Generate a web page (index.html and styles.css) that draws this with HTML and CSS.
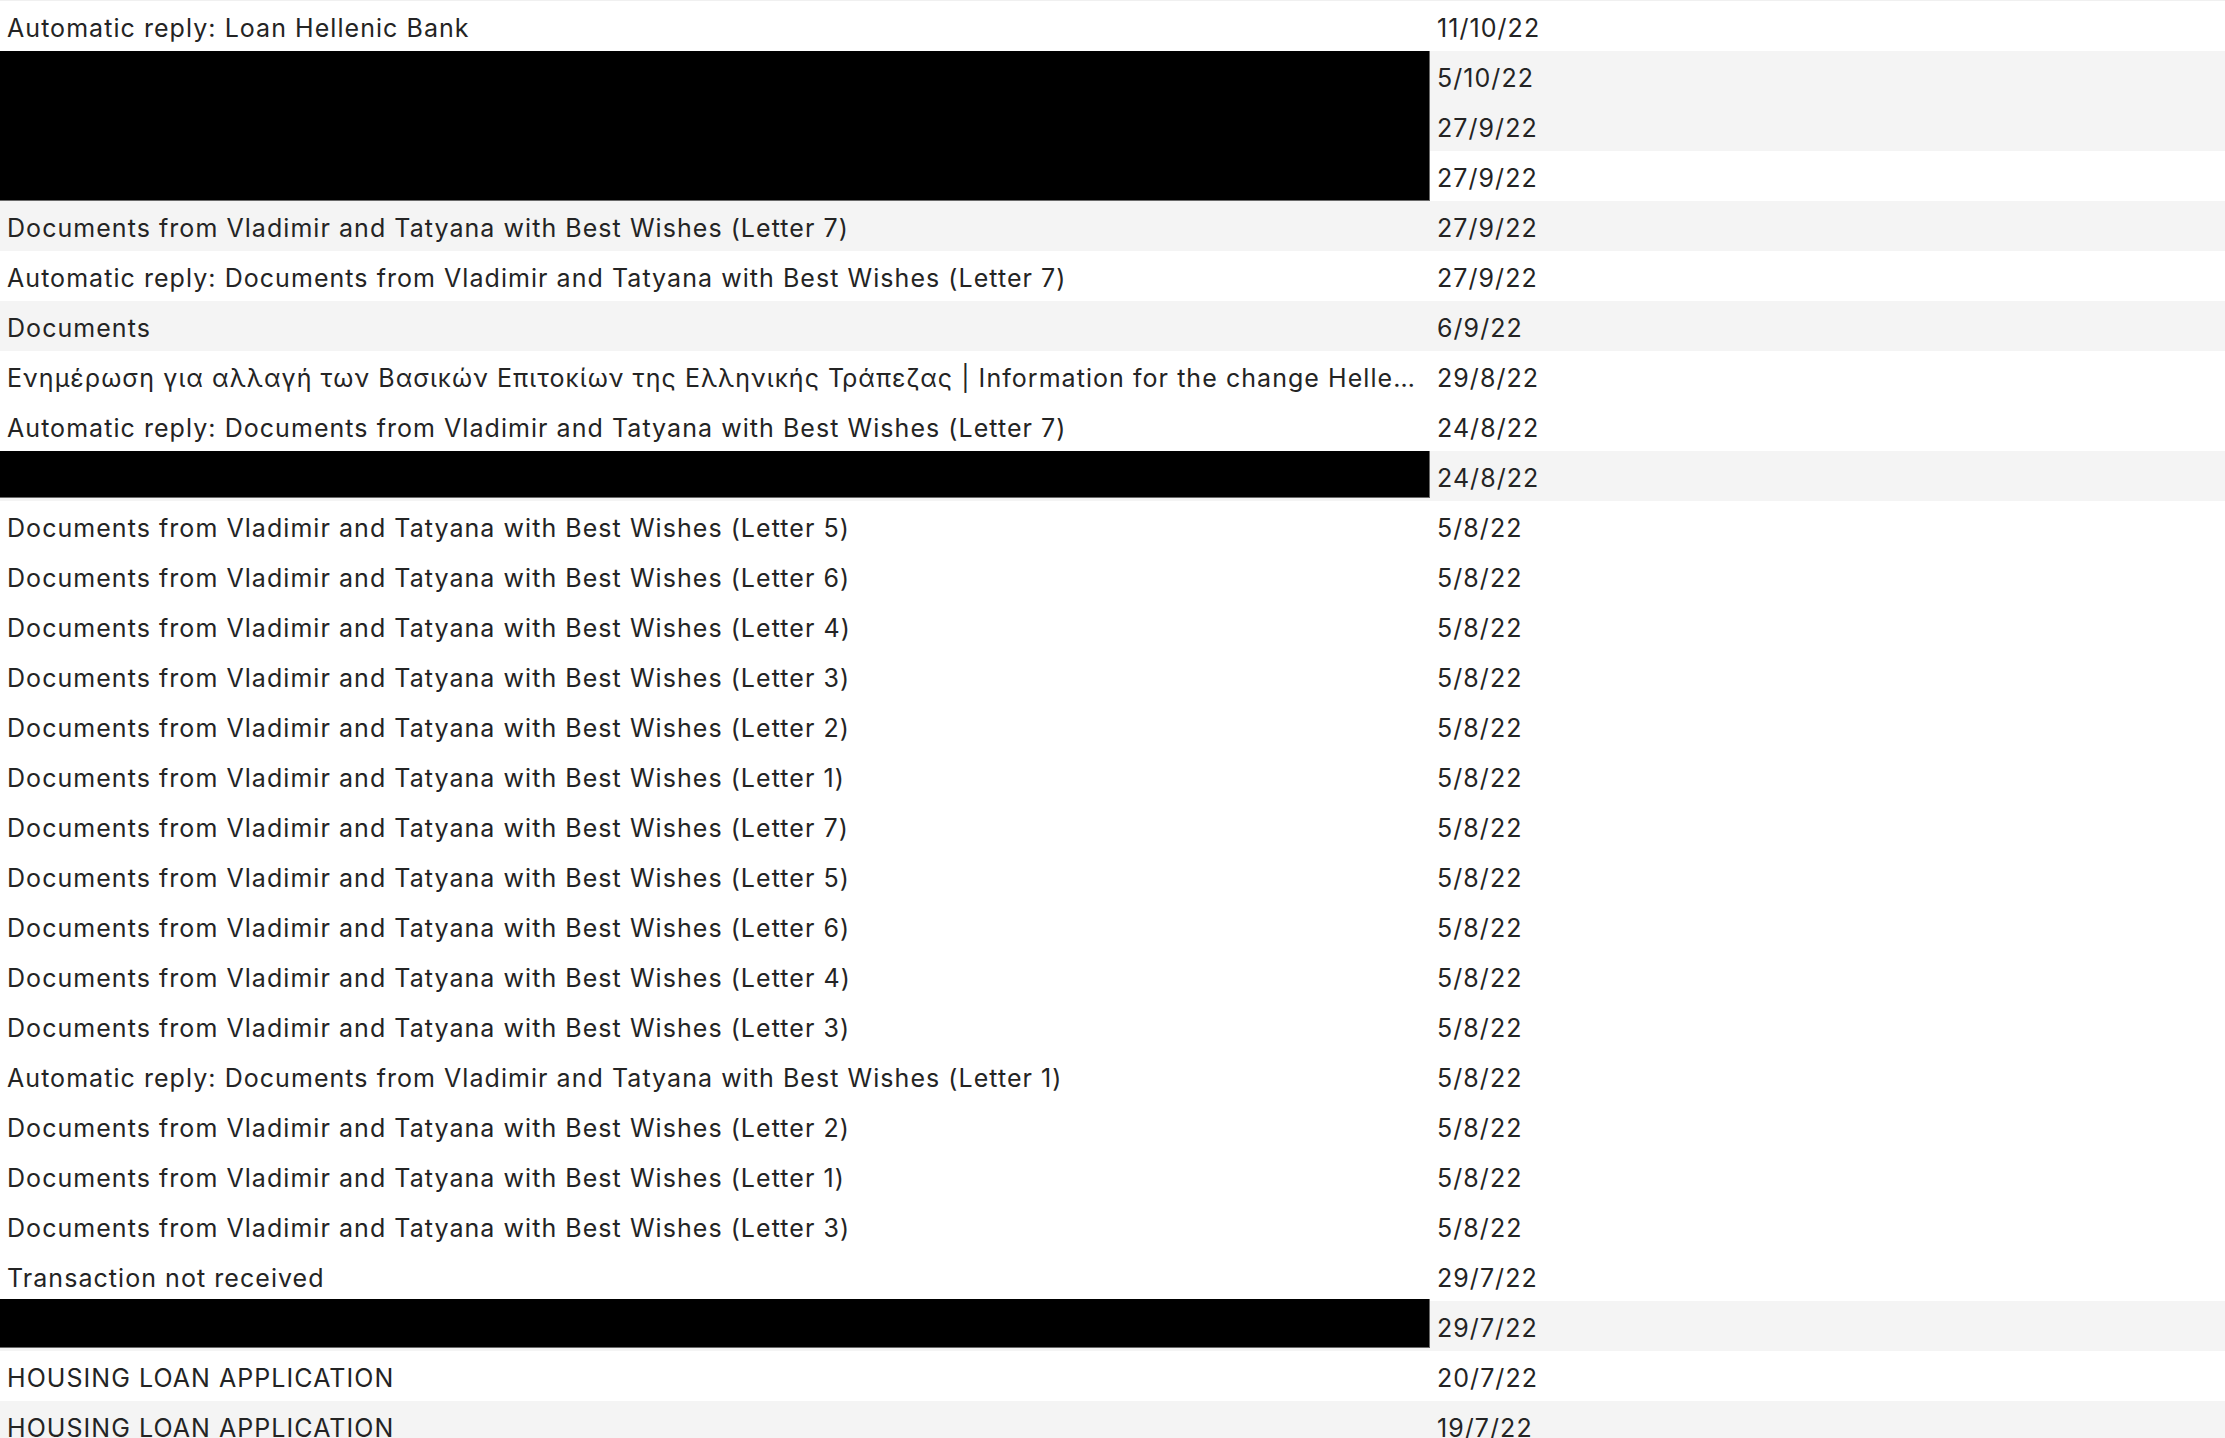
FILE: index.html
```html
<!DOCTYPE html>
<html lang="en">
<head>
    <meta charset="UTF-8">
    <meta name="viewport" content="width=device-width, initial-scale=1.0">
    <title>Mail</title>
    <link rel="stylesheet" href="styles.css">
</head>
<body>
    <div class="mail-list">
        <div class="row"><div class="subject">Automatic reply: Loan Hellenic Bank</div><div class="date">11/10/22</div></div>
        <div class="row alt"><div class="subject"></div><div class="date">5/10/22</div></div>
        <div class="row alt"><div class="subject"></div><div class="date">27/9/22</div></div>
        <div class="row"><div class="subject"></div><div class="date">27/9/22</div></div>
        <div class="row alt"><div class="subject">Documents from Vladimir and Tatyana with Best Wishes (Letter 7)</div><div class="date">27/9/22</div></div>
        <div class="row"><div class="subject">Automatic reply: Documents from Vladimir and Tatyana with Best Wishes (Letter 7)</div><div class="date">27/9/22</div></div>
        <div class="row alt"><div class="subject">Documents</div><div class="date">6/9/22</div></div>
        <div class="row"><div class="subject">Ενημέρωση για αλλαγή των Βασικών Επιτοκίων της Ελληνικής Τράπεζας | Information for the change Helle…</div><div class="date">29/8/22</div></div>
        <div class="row"><div class="subject">Automatic reply: Documents from Vladimir and Tatyana with Best Wishes (Letter 7)</div><div class="date">24/8/22</div></div>
        <div class="row alt"><div class="subject"></div><div class="date">24/8/22</div></div>
        <div class="row"><div class="subject">Documents from Vladimir and Tatyana with Best Wishes (Letter 5)</div><div class="date">5/8/22</div></div>
        <div class="row"><div class="subject">Documents from Vladimir and Tatyana with Best Wishes (Letter 6)</div><div class="date">5/8/22</div></div>
        <div class="row"><div class="subject">Documents from Vladimir and Tatyana with Best Wishes (Letter 4)</div><div class="date">5/8/22</div></div>
        <div class="row"><div class="subject">Documents from Vladimir and Tatyana with Best Wishes (Letter 3)</div><div class="date">5/8/22</div></div>
        <div class="row"><div class="subject">Documents from Vladimir and Tatyana with Best Wishes (Letter 2)</div><div class="date">5/8/22</div></div>
        <div class="row"><div class="subject">Documents from Vladimir and Tatyana with Best Wishes (Letter 1)</div><div class="date">5/8/22</div></div>
        <div class="row"><div class="subject">Documents from Vladimir and Tatyana with Best Wishes (Letter 7)</div><div class="date">5/8/22</div></div>
        <div class="row"><div class="subject">Documents from Vladimir and Tatyana with Best Wishes (Letter 5)</div><div class="date">5/8/22</div></div>
        <div class="row"><div class="subject">Documents from Vladimir and Tatyana with Best Wishes (Letter 6)</div><div class="date">5/8/22</div></div>
        <div class="row"><div class="subject">Documents from Vladimir and Tatyana with Best Wishes (Letter 4)</div><div class="date">5/8/22</div></div>
        <div class="row"><div class="subject">Documents from Vladimir and Tatyana with Best Wishes (Letter 3)</div><div class="date">5/8/22</div></div>
        <div class="row"><div class="subject">Automatic reply: Documents from Vladimir and Tatyana with Best Wishes (Letter 1)</div><div class="date">5/8/22</div></div>
        <div class="row"><div class="subject">Documents from Vladimir and Tatyana with Best Wishes (Letter 2)</div><div class="date">5/8/22</div></div>
        <div class="row"><div class="subject">Documents from Vladimir and Tatyana with Best Wishes (Letter 1)</div><div class="date">5/8/22</div></div>
        <div class="row"><div class="subject">Documents from Vladimir and Tatyana with Best Wishes (Letter 3)</div><div class="date">5/8/22</div></div>
        <div class="row"><div class="subject">Transaction not received</div><div class="date">29/7/22</div></div>
        <div class="row alt"><div class="subject"></div><div class="date">29/7/22</div></div>
        <div class="row"><div class="subject">HOUSING LOAN APPLICATION</div><div class="date">20/7/22</div></div>
        <div class="row alt"><div class="subject">HOUSING LOAN APPLICATION</div><div class="date">19/7/22</div></div>

        <!-- redactions drawn over the subjects -->
        <div class="redact redact-1"></div>
        <div class="redact redact-2"></div>
        <div class="redact redact-3"></div>
    </div>
</body>
</html>
```

FILE: styles.css
```css
body {
    margin: 0;
    padding: 0;
    background: #ffffff;
    font-family: Inter, "Noto Sans", sans-serif;
    color: #242424;
    overflow: hidden;
}
.mail-list {
    position: relative;
    border-top: 1px solid #f0f0f0;
}
.row {
    display: grid;
    grid-template-columns: 1430px 1fr;
    height: 50px;
    align-items: center;
    font-size: 25px;
    letter-spacing: 1.05px;
}
.row.alt {
    background: #f4f4f4;
}
.subject {
    padding: 3px 6px 0 7px;
    white-space: nowrap;
    overflow: hidden;
    text-overflow: ellipsis;
}
.date {
    padding: 3px 0 0 7px;
    white-space: nowrap;
}
.redact {
    position: absolute;
    left: 0;
    width: 1429px;
    background: #000;
    border-right: 1px solid #6a6a6a;
    border-bottom: 1px solid #6a6a6a;
}
.redact-1 {
    top: 50px;
    height: 149px;
}
.redact-2 {
    top: 450px;
    height: 46px;
}
.redact-3 {
    top: 1298px;
    height: 48px;
}
```
